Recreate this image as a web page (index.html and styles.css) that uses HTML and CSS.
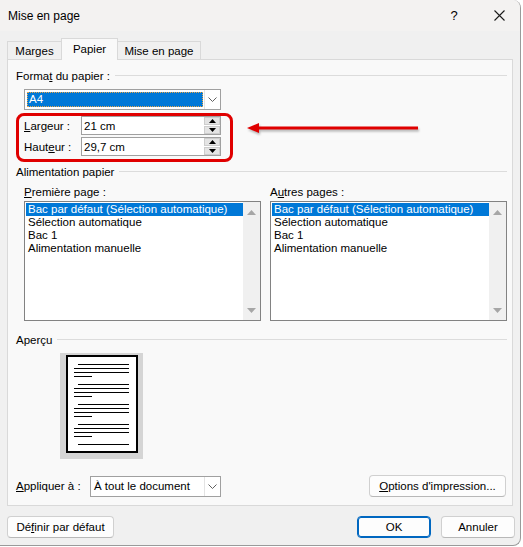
FILE: index.html
```html
<!DOCTYPE html>
<html lang="fr">
<head>
<meta charset="utf-8">
<title>Mise en page</title>
<link rel="stylesheet" href="styles.css">
</head>
<body>
<div class="window">
  <div class="titlebar">
    <span class="title">Mise en page</span>
    <span class="help">?</span>
    <svg class="close" width="11" height="11" viewBox="0 0 11 11"><path d="M0.5 0.5 L10.5 10.5 M10.5 0.5 L0.5 10.5" stroke="#1a1a1a" stroke-width="1.1" fill="none"/></svg>
  </div>
  <div class="content">
    <div class="tabs">
      <div class="tab t1">Marges</div>
      <div class="tab t2 active">Papier</div>
      <div class="tab t3">Mise en page</div>
    </div>
    <div class="panel">
      <div class="ghead first"><span>Forma<u>t</u> du papier :</span><span class="rule"></span></div>
      <div class="combo size">
        <div class="val sel">A4</div>
        <div class="ddbtn"><svg width="9" height="5" viewBox="0 0 9 5"><path d="M0.5 0.5 L4.5 4.5 L8.5 0.5" stroke="#606060" fill="none"/></svg></div>
      </div>
      <div class="frow r1">
        <span class="flabel"><u>L</u>argeur :</span>
        <div class="spin"><span>21 cm</span>
          <div class="spinbtns">
            <div class="sbtn"><svg width="7" height="4" viewBox="0 0 7 4"><path d="M0 4 L3.5 0 L7 4 Z" fill="#000"/></svg></div>
            <div class="sbtn"><svg width="7" height="4" viewBox="0 0 7 4"><path d="M0 0 L3.5 4 L7 0 Z" fill="#000"/></svg></div>
          </div>
        </div>
      </div>
      <div class="frow r2">
        <span class="flabel">Haut<u>e</u>ur :</span>
        <div class="spin"><span>29,7 cm</span>
          <div class="spinbtns">
            <div class="sbtn"><svg width="7" height="4" viewBox="0 0 7 4"><path d="M0 4 L3.5 0 L7 4 Z" fill="#000"/></svg></div>
            <div class="sbtn"><svg width="7" height="4" viewBox="0 0 7 4"><path d="M0 0 L3.5 4 L7 0 Z" fill="#000"/></svg></div>
          </div>
        </div>
      </div>
      <div class="ghead second"><span>Alimentation papier</span><span class="rule"></span></div>
      <div class="cols">
        <div class="col">
          <div class="clabel"><u>P</u>remière page :</div>
          <div class="listbox">
            <div class="items">
              <div class="item sel">Bac par défaut (Sélection automatique)</div>
              <div class="item">Sélection automatique</div>
              <div class="item">Bac 1</div>
              <div class="item">Alimentation manuelle</div>
            </div>
            <div class="sb">
              <svg width="9" height="5" viewBox="0 0 9 5"><path d="M0 5 L4.5 0 L9 5 Z" fill="#a6a6a6"/></svg>
              <svg width="9" height="5" viewBox="0 0 9 5"><path d="M0 0 L4.5 5 L9 0 Z" fill="#a6a6a6"/></svg>
            </div>
          </div>
        </div>
        <div class="col">
          <div class="clabel">A<u>u</u>tres pages :</div>
          <div class="listbox">
            <div class="items">
              <div class="item sel">Bac par défaut (Sélection automatique)</div>
              <div class="item">Sélection automatique</div>
              <div class="item">Bac 1</div>
              <div class="item">Alimentation manuelle</div>
            </div>
            <div class="sb">
              <svg width="9" height="5" viewBox="0 0 9 5"><path d="M0 5 L4.5 0 L9 5 Z" fill="#a6a6a6"/></svg>
              <svg width="9" height="5" viewBox="0 0 9 5"><path d="M0 0 L4.5 5 L9 0 Z" fill="#a6a6a6"/></svg>
            </div>
          </div>
        </div>
      </div>
      <div class="ghead third"><span>Aperçu</span><span class="rule"></span></div>
      <div class="preview">
        <div class="page">
          <div class="pl ind"></div><div class="pl"></div><div class="pl"></div><div class="pl short"></div>
          <div class="pl ind gs"></div><div class="pl"></div><div class="pl"></div><div class="pl short"></div>
          <div class="pl ind gs"></div><div class="pl"></div><div class="pl"></div><div class="pl short"></div>
          <div class="pl ind gs"></div><div class="pl"></div><div class="pl"></div><div class="pl short"></div>
          <div class="pl ind gs"></div>
        </div>
      </div>
      <div class="applyrow">
        <span class="alabel"><u>A</u>ppliquer à :</span>
        <div class="combo apply">
          <div class="val">À tout le document</div>
          <div class="ddbtn"><svg width="9" height="5" viewBox="0 0 9 5"><path d="M0.5 0.5 L4.5 4.5 L8.5 0.5" stroke="#606060" fill="none"/></svg></div>
        </div>
        <div class="btn options"><span><u>O</u>ptions d'impression...</span></div>
      </div>
    </div>
    <div class="footer">
      <div class="btn def">Dé<u>f</u>inir par défaut</div>
      <div class="btn ok">OK</div>
      <div class="btn cancel">Annuler</div>
    </div>
  </div>
  <div class="annot-box"></div>
  <svg class="annot-arrow" width="180" height="20" viewBox="0 0 180 20">
    <path d="M13 10 L174 10" stroke="#e00000" stroke-width="3" fill="none"/>
    <path d="M3 10 L15 5 L15 15 Z" fill="#e00000"/>
  </svg>
</div>
</body>
</html>
```

FILE: styles.css
```css
* { box-sizing: border-box; }

body {
  margin: 0;
  background: #ffffff;
  font-family: "Liberation Sans", Arial, sans-serif;
  font-size: 11.5px;
  color: #000;
}

u { text-decoration: underline; text-underline-offset: 1px; }

.window {
  position: relative;
  width: 521px;
  height: 546px;
  background: #f0f0f0;
  border-right: 1px solid #9a9a9a;
  border-bottom: 1px solid #9a9a9a;
  border-radius: 0 8px 8px 0;
  overflow: hidden;
}

.titlebar {
  height: 31px;
  background: #f3f2f1;
  display: flex;
  align-items: center;
  padding-left: 8px;
  font-size: 12px;
}
.title { flex: 1; }
.help { width: 12px; text-align: center; margin-right: 34px; font-size: 13px; }
.close { margin-right: 15px; }

.content { padding: 0 7px; }

.tabs {
  display: flex;
  align-items: flex-end;
  height: 21px;
  margin-top: 7px;
  position: relative;
  z-index: 1;
}
.tab {
  height: 18px;
  border: 1px solid #d9d9d9;
  border-bottom: none;
  background: #f0f0f0;
  display: flex;
  align-items: center;
  justify-content: center;
  font-size: 11.5px;
  padding-top: 1px;
}
.t1 { width: 55px; }
.t2 { width: 57px; margin-left: -1px; }
.t3 { width: 84px; margin-left: -1px; }
.tab.active {
  height: 22px;
  margin-bottom: -1px;
  background: #f9f9f9;
  padding-top: 0;
  padding-bottom: 1px;
}

.panel {
  width: 506px;
  height: 447px;
  border: 1px solid #d9d9d9;
  background: #f9f9f9;
  padding: 0 5px 0 8px;
}

.ghead {
  display: flex;
  align-items: center;
  height: 16px;
}
.ghead .rule { flex: 1; height: 1px; background: #dcdcdc; margin-left: 5px; margin-top: -1px; }
.ghead.first { margin-top: 8px; }
.ghead.second { margin-top: 8px; }
.ghead.third { margin-top: 11px; }

.combo {
  height: 21px;
  border: 1px solid #a0a0a0;
  background: #fff;
  display: flex;
}
.combo.size { width: 197px; margin: 5px 0 0 8px; }
.combo .val {
  flex: 1;
  margin: 2px 1px 2px 2px;
  padding-left: 2px;
  line-height: 15px;
}
.combo .val.sel {
  background: #0078d7;
  color: #fff;
  outline: 1px dotted #e9a64a;
  outline-offset: -1px;
}
.ddbtn {
  width: 16px;
  border-left: 1px solid #e3e3e3;
  display: flex;
  align-items: center;
  justify-content: center;
  background: #fff;
}

.frow {
  display: flex;
  align-items: center;
  height: 19px;
  margin-left: 8px;
}
.frow.r1 { margin-top: 6px; }
.frow.r2 { margin-top: 2px; }
.flabel { width: 57px; }
.spin {
  width: 140px;
  height: 19px;
  border: 1px solid #a0a0a0;
  background: #fff;
  display: flex;
  align-items: center;
  padding-left: 2px;
}
.spinbtns {
  margin-left: auto;
  width: 16px;
  height: 17px;
  display: flex;
  flex-direction: column;
  gap: 1px;
}
.sbtn {
  flex: 1;
  background: #e4e4e4;
  border: 1px solid #cdcdcd;
  display: flex;
  align-items: center;
  justify-content: center;
}

.cols {
  display: flex;
  gap: 9px;
  margin: 5px 0 0 8px;
}
.col { width: 237px; }
.clabel { height: 14px; line-height: 14px; }
.listbox {
  margin-top: 2px;
  height: 120px;
  border: 1px solid #828282;
  background: #fff;
  display: flex;
}
.items { flex: 1; padding: 1px 0 0 1px; }
.item { height: 13px; line-height: 13px; padding-left: 2px; white-space: nowrap; }
.item.sel { background: #0078d7; color: #fff; }
.sb {
  width: 17px;
  background: #f0f0f0;
  display: flex;
  flex-direction: column;
  justify-content: space-between;
  align-items: center;
  padding: 8px 0 7px;
}

.preview {
  margin: 5px 0 0 44px;
  width: 83px;
  height: 106px;
  background: #d5d5d5;
  padding: 2px 5px 6px 6px;
}
.page {
  width: 72px;
  height: 98px;
  border: 2px solid #000;
  background: #fff;
  padding-top: 4px;
}
.pl { height: 1px; background: #000; margin-top: 3px; margin-left: 6px; width: 55px; }
.pl.ind { margin-left: 10px; width: 51px; }
.pl.short { width: 18px; }
.pl.gs { margin-top: 7px; }

.applyrow {
  display: flex;
  align-items: center;
  height: 22px;
  margin-top: 16px;
}
.alabel { width: 74px; }
.combo.apply { width: 131px; }
.combo.apply .val { margin: 0; padding-left: 3px; line-height: 18px; }

.btn {
  height: 22px;
  border: 1px solid #d0d0d0;
  border-bottom-color: #b8b8b8;
  border-radius: 4px;
  background: #fdfdfd;
  display: flex;
  align-items: center;
  justify-content: center;
}
.btn.options { width: 137px; margin-left: auto; margin-right: 1px; }

.footer {
  display: flex;
  height: 22px;
  margin-top: 10px;
  margin-right: -2px;
}
.btn.def { width: 107px; }
.btn.ok {
  width: 74px;
  margin-left: auto;
  border: 1px solid #0067c0;
  box-shadow: inset 0 0 0 1px #0067c0;
}
.btn.cancel { width: 74px; margin-left: 10px; }

.annot-box {
  position: absolute;
  left: 16px;
  top: 113px;
  width: 217px;
  height: 49px;
  border: 3px solid #e00000;
  border-radius: 8px;
}
.annot-arrow {
  position: absolute;
  left: 244px;
  top: 118px;
  filter: drop-shadow(1px 2px 1px rgba(0, 0, 0, 0.28));
}
```
